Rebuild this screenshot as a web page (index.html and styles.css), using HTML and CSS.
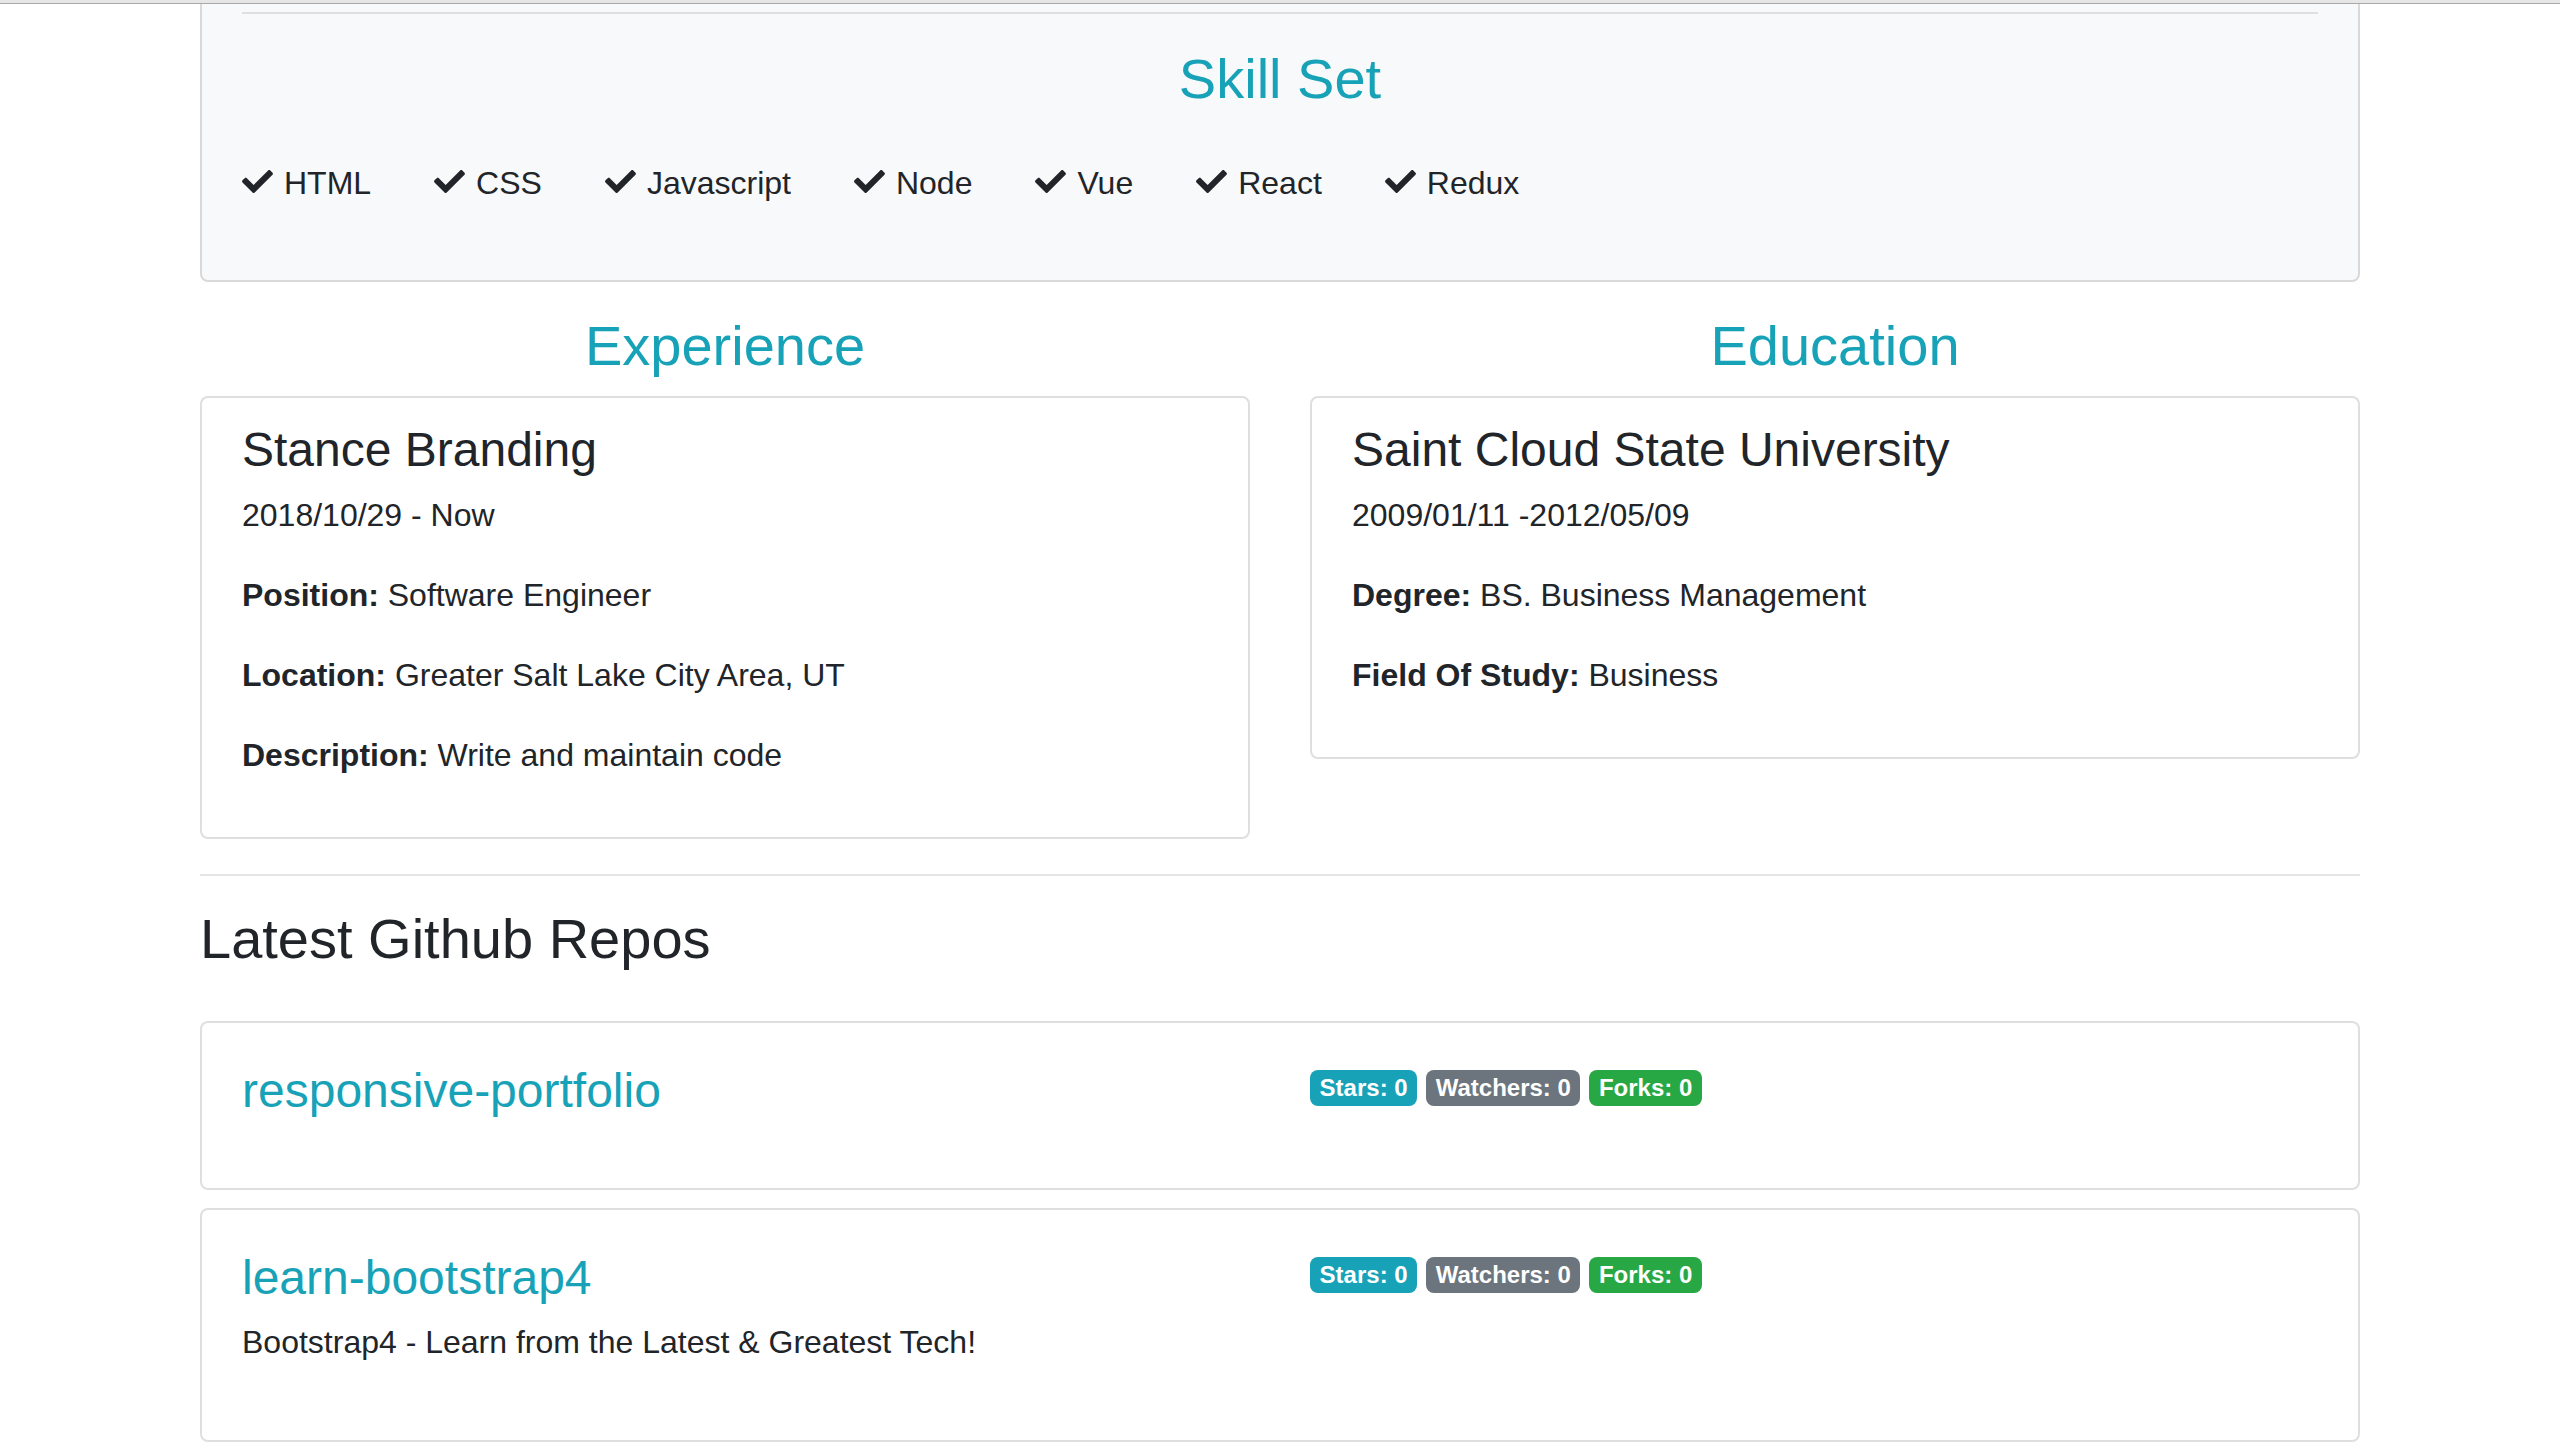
FILE: index.html
```html
<!DOCTYPE html>
<html lang="en">
<head>
<meta charset="utf-8">
<title>Profile</title>
<link rel="stylesheet" href="styles.css">
</head>
<body>
<div class="topbar"></div>
<main class="container">
  <section class="card card-light skills-card">
    <hr class="skills-hr">
    <h3 class="section-title skills-title">Skill Set</h3>
    <div class="skills">
      <span class="skill"><svg class="check" viewBox="0 65 512 381"><path d="M173.898 439.404l-166.4-166.4c-9.997-9.997-9.997-26.206 0-36.204l36.203-36.204c9.997-9.998 26.207-9.998 36.204 0L192 312.69 432.095 72.596c9.997-9.997 26.207-9.997 36.204 0l36.203 36.204c9.997 9.997 9.997 26.206 0 36.204l-294.4 294.401c-9.998 9.997-26.207 9.997-36.204-.001z"/></svg>HTML</span>
      <span class="skill"><svg class="check" viewBox="0 65 512 381"><path d="M173.898 439.404l-166.4-166.4c-9.997-9.997-9.997-26.206 0-36.204l36.203-36.204c9.997-9.998 26.207-9.998 36.204 0L192 312.69 432.095 72.596c9.997-9.997 26.207-9.997 36.204 0l36.203 36.204c9.997 9.997 9.997 26.206 0 36.204l-294.4 294.401c-9.998 9.997-26.207 9.997-36.204-.001z"/></svg>CSS</span>
      <span class="skill"><svg class="check" viewBox="0 65 512 381"><path d="M173.898 439.404l-166.4-166.4c-9.997-9.997-9.997-26.206 0-36.204l36.203-36.204c9.997-9.998 26.207-9.998 36.204 0L192 312.69 432.095 72.596c9.997-9.997 26.207-9.997 36.204 0l36.203 36.204c9.997 9.997 9.997 26.206 0 36.204l-294.4 294.401c-9.998 9.997-26.207 9.997-36.204-.001z"/></svg>Javascript</span>
      <span class="skill"><svg class="check" viewBox="0 65 512 381"><path d="M173.898 439.404l-166.4-166.4c-9.997-9.997-9.997-26.206 0-36.204l36.203-36.204c9.997-9.998 26.207-9.998 36.204 0L192 312.69 432.095 72.596c9.997-9.997 26.207-9.997 36.204 0l36.203 36.204c9.997 9.997 9.997 26.206 0 36.204l-294.4 294.401c-9.998 9.997-26.207 9.997-36.204-.001z"/></svg>Node</span>
      <span class="skill"><svg class="check" viewBox="0 65 512 381"><path d="M173.898 439.404l-166.4-166.4c-9.997-9.997-9.997-26.206 0-36.204l36.203-36.204c9.997-9.998 26.207-9.998 36.204 0L192 312.69 432.095 72.596c9.997-9.997 26.207-9.997 36.204 0l36.203 36.204c9.997 9.997 9.997 26.206 0 36.204l-294.4 294.401c-9.998 9.997-26.207 9.997-36.204-.001z"/></svg>Vue</span>
      <span class="skill"><svg class="check" viewBox="0 65 512 381"><path d="M173.898 439.404l-166.4-166.4c-9.997-9.997-9.997-26.206 0-36.204l36.203-36.204c9.997-9.998 26.207-9.998 36.204 0L192 312.69 432.095 72.596c9.997-9.997 26.207-9.997 36.204 0l36.203 36.204c9.997 9.997 9.997 26.206 0 36.204l-294.4 294.401c-9.998 9.997-26.207 9.997-36.204-.001z"/></svg>React</span>
      <span class="skill"><svg class="check" viewBox="0 65 512 381"><path d="M173.898 439.404l-166.4-166.4c-9.997-9.997-9.997-26.206 0-36.204l36.203-36.204c9.997-9.998 26.207-9.998 36.204 0L192 312.69 432.095 72.596c9.997-9.997 26.207-9.997 36.204 0l36.203 36.204c9.997 9.997 9.997 26.206 0 36.204l-294.4 294.401c-9.998 9.997-26.207 9.997-36.204-.001z"/></svg>Redux</span>
    </div>
  </section>

  <div class="two-col">
    <div class="col">
      <h3 class="section-title">Experience</h3>
      <div class="card info-card">
        <h4 class="card-title">Stance Branding</h4>
        <p>2018/10/29 - Now</p>
        <p><strong>Position:</strong> Software Engineer</p>
        <p><strong>Location:</strong> Greater Salt Lake City Area, UT</p>
        <p><strong>Description:</strong> Write and maintain code</p>
      </div>
    </div>
    <div class="col">
      <h3 class="section-title">Education</h3>
      <div class="card info-card">
        <h4 class="card-title">Saint Cloud State University</h4>
        <p>2009/01/11 -2012/05/09</p>
        <p><strong>Degree:</strong> BS. Business Management</p>
        <p><strong>Field Of Study:</strong> Business</p>
      </div>
    </div>
  </div>

  <hr class="divider">

  <h3 class="repos-title">Latest Github Repos</h3>

  <div class="card repo-card">
    <div class="repo-main">
      <h4 class="card-title"><a class="repo-link" href="#">responsive-portfolio</a></h4>
      <p class="repo-desc"></p>
    </div>
    <div class="repo-badges">
      <span class="badge badge-info">Stars: 0</span>
      <span class="badge badge-secondary">Watchers: 0</span>
      <span class="badge badge-success">Forks: 0</span>
    </div>
  </div>

  <div class="card repo-card">
    <div class="repo-main">
      <h4 class="card-title"><a class="repo-link" href="#">learn-bootstrap4</a></h4>
      <p class="repo-desc">Bootstrap4 - Learn from the Latest &amp; Greatest Tech!</p>
    </div>
    <div class="repo-badges">
      <span class="badge badge-info">Stars: 0</span>
      <span class="badge badge-secondary">Watchers: 0</span>
      <span class="badge badge-success">Forks: 0</span>
    </div>
  </div>
</main>
</body>
</html>
```

FILE: styles.css
```css
* {
  box-sizing: border-box;
}

html, body {
  margin: 0;
  padding: 0;
  background: #ffffff;
}

body {
  font-family: "Liberation Sans", Arial, Helvetica, sans-serif;
  font-size: 32px;
  line-height: 1.5;
  color: #212529;
  overflow: hidden;
}

.topbar {
  position: fixed;
  top: 0;
  left: 0;
  right: 0;
  height: 4px;
  background: #e6e6e6;
  border-bottom: 1px solid #a8a8a8;
  z-index: 10;
}

.container {
  width: 2160px;
  margin: -30px auto 0;
}

.card {
  border: 2px solid rgba(0, 0, 0, 0.125);
  border-radius: 8px;
  background: #ffffff;
}

.card-light {
  background: #f8f9fa;
}

.skills-card {
  padding: 40px 40px 73px;
}

.skills-hr {
  margin: 0 0 31px;
  border: 0;
  border-top: 2px solid rgba(0, 0, 0, 0.1);
  height: 0;
}

.section-title {
  margin: 0 0 17px;
  font-size: 56px;
  font-weight: 400;
  line-height: 1.2;
  color: #17a2b8;
  text-align: center;
}

.skills-title {
  margin-bottom: 47px;
}

.skills {
  display: flex;
  gap: 63px;
  line-height: 48px;
}

.skill {
  white-space: nowrap;
}

.check {
  width: 31px;
  height: 23px;
  margin-right: 11px;
  vertical-align: 1px;
  fill: #212529;
}

.two-col {
  display: grid;
  grid-template-columns: 1fr 1fr;
  column-gap: 60px;
  align-items: start;
  margin-top: 30px;
}

.info-card {
  padding: 23px 40px 26px;
}

.card-title {
  margin: 0 0 12px;
  font-size: 48px;
  font-weight: 400;
  line-height: 1.2;
}

.info-card p,
.repo-desc {
  margin: 0 0 32px;
}

.repo-desc:empty {
  margin-bottom: 26px;
}

strong {
  font-weight: 700;
}

.divider {
  margin: 35px 0 29px;
  border: 0;
  border-top: 2px solid rgba(0, 0, 0, 0.1);
  height: 0;
}

.repos-title {
  margin: 0 0 49px;
  font-size: 56px;
  font-weight: 400;
  line-height: 1.2;
}

.repo-card {
  display: grid;
  grid-template-columns: 1fr 1fr;
  column-gap: 60px;
  padding: 39px 40px 42px;
  margin-bottom: 18px;
}

.repo-link {
  color: #17a2b8;
  text-decoration: none;
}

.repo-badges {
  line-height: 48px;
  padding-top: 1px;
}

.badge {
  display: inline-block;
  padding: 6px 9.6px;
  font-size: 24px;
  font-weight: 700;
  line-height: 1;
  color: #ffffff;
  border-radius: 8px;
  white-space: nowrap;
  vertical-align: 2px;
}

.badge-info {
  background: #17a2b8;
}

.badge-secondary {
  background: #6c757d;
}

.badge-success {
  background: #28a745;
}
```
